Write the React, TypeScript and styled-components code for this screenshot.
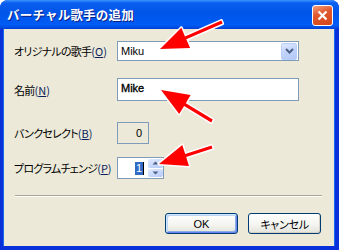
import styled, { createGlobalStyle } from 'styled-components';

const GlobalStyle = createGlobalStyle`
	html, body {
		margin: 0;
		padding: 0;
		background: #ffffff;
	}
	* {
		box-sizing: border-box;
	}
`;

const JP = `"Noto Sans CJK JP", "Noto Sans", sans-serif`;
const LATIN = `"Liberation Sans", "DejaVu Sans", sans-serif`;

const Window = styled.div`
	position: relative;
	width: 339px;
	height: 250px;
	display: flex;
	flex-direction: column;
	background: #0831d9;
	border-radius: 8px 8px 0 0;
	overflow: hidden;
`;

const TitleBar = styled.div`
	height: 29px;
	flex: none;
	display: flex;
	align-items: center;
	justify-content: space-between;
	padding: 0 6px 0 7px;
	background: linear-gradient(
		180deg,
		#3d95ff 0%,
		#0a5ff0 10%,
		#0055e8 45%,
		#005cf5 85%,
		#0050e6 93%,
		#003dd7 100%
	);
`;

const Title = styled.span`
	font-family: ${JP};
	font-size: 12.5px;
	font-weight: bold;
	color: #ffffff;
	text-shadow: 1px 1px 0 #0a1e8a;
	letter-spacing: 0.2px;
`;

const CloseButton = styled.div`
	width: 21px;
	height: 21px;
	margin-top: 2px;
	border: 1px solid #ffffff;
	border-radius: 3px;
	background: linear-gradient(160deg, #f4a07c 0%, #e2582e 40%, #d24619 100%);
	display: flex;
	align-items: center;
	justify-content: center;
`;

const Client = styled.div`
	flex: 1;
	margin: 0 4px 4px 3px;
	background: #ece9d8;
	display: flex;
	flex-direction: column;
	padding: 12px 0 0 10px;
	border-left: 1px solid #166aee;
	border-right: 1px solid #166aee;
`;

const Row = styled.div<{ $mt: number }>`
	display: flex;
	align-items: center;
	margin-top: ${(p) => p.$mt}px;
`;

const Label = styled.label`
	width: 103px;
	flex: none;
	white-space: nowrap;
	font-family: ${JP};
	font-size: 11px;
	font-feature-settings: 'palt';
	letter-spacing: -0.75px;
	color: #000000;
`;

const Key = styled.span`
	color: #0b1f5c;
	letter-spacing: 0;
	& u {
		text-decoration-thickness: 1px;
		text-underline-offset: 1px;
	}
`;

const Box = styled.div<{ $w: number; $h: number; $disabled?: boolean }>`
	width: ${(p) => p.$w}px;
	height: ${(p) => p.$h}px;
	border: 1px solid #7f9db9;
	background: ${(p) => (p.$disabled ? '#ece9d8' : '#ffffff')};
	display: flex;
	align-items: center;
	font-family: ${LATIN};
	font-size: 11px;
	color: #000000;
`;

const ComboText = styled.span`
	flex: 1;
	padding-left: 3px;
`;

const InputText = styled.span`
	align-self: flex-start;
	padding: 3px 0 0 3px;
	-webkit-text-stroke: 0.35px #000000;
`;

const RightText = styled.span`
	flex: 1;
	text-align: right;
	padding-right: 6px;
`;

const DropButton = styled.div`
	width: 16px;
	height: 17px;
	margin-right: 1px;
	border-radius: 2px;
	background: linear-gradient(160deg, #dfe9ff 0%, #c1d3fb 50%, #b4c8f6 100%);
	border: 1px solid #bacff7;
	display: flex;
	align-items: center;
	justify-content: center;
`;

const SpinField = styled.div`
	flex: 1;
	height: 100%;
	display: flex;
	align-items: center;
	justify-content: flex-end;
	padding-right: 4px;
`;

const Selected = styled.span`
	background: #316ac5;
	color: #ffffff;
	padding: 0 1px;
	line-height: 13px;
	border-right: 1px solid #000;
`;

const SpinColumn = styled.div`
	width: 15px;
	height: 100%;
	display: flex;
	flex-direction: column;
	gap: 1px;
	padding: 1px 0;
`;

const SpinButton = styled.div`
	flex: 1;
	border-radius: 2px;
	background: linear-gradient(160deg, #e2ebff 0%, #c6d6fb 60%, #b7cbf7 100%);
	display: flex;
	align-items: center;
	justify-content: center;
`;

const Separator = styled.div`
	margin: 16px 12px 0 1px;
	height: 2px;
	border-top: 1px solid #aca899;
	border-bottom: 1px solid #ffffff;
`;

const ButtonRow = styled.div`
	display: flex;
	justify-content: flex-end;
	gap: 10px;
	margin-top: 16px;
	padding-right: 13px;
`;

const Button = styled.div<{ $default?: boolean }>`
	width: 73px;
	height: 21px;
	border: 1px solid #003c74;
	border-radius: 3px;
	background: linear-gradient(180deg, #ffffff 0%, #f3f3ef 60%, #e3e2da 100%);
	box-shadow: ${(p) =>
		p.$default
			? 'inset 1px 1px 0 #cee7ff, inset -1px -1px 0 #6982ee, inset 2px 2px 0 #bcd4f6, inset -2px -2px 0 #89ade4'
			: 'inset -1px -1px 0 #d6d0c5'};
	display: flex;
	align-items: center;
	justify-content: center;
	font-family: ${LATIN};
	font-size: 11px;
	color: #000000;
`;

const ButtonJP = styled.span`
	font-family: ${JP};
	font-size: 11px;
	font-feature-settings: 'palt';
	letter-spacing: -0.3px;
`;

const Overlay = styled.svg`
	position: absolute;
	left: 0;
	top: 0;
	pointer-events: none;
`;

type Pt = [number, number];

function arrowPoints(tail: Pt, tip: Pt, head = 28, half = 11, shaft = 1.6): string {
	const dx = tip[0] - tail[0];
	const dy = tip[1] - tail[1];
	const len = Math.hypot(dx, dy);
	const ux = dx / len;
	const uy = dy / len;
	const nx = -uy;
	const ny = ux;
	const bx = tip[0] - ux * head;
	const by = tip[1] - uy * head;
	const pts: Pt[] = [
		[tail[0] + nx * shaft, tail[1] + ny * shaft],
		[bx + nx * shaft, by + ny * shaft],
		[bx + nx * half, by + ny * half],
		tip,
		[bx - nx * half, by - ny * half],
		[bx - nx * shaft, by - ny * shaft],
		[tail[0] - nx * shaft, tail[1] - ny * shaft],
	];
	return pts.map((p) => `${p[0].toFixed(1)},${p[1].toFixed(1)}`).join(' ');
}

const arrows: [Pt, Pt][] = [
	[[222, 22], [160, 49]],
	[[212, 121], [161, 90]],
	[[212, 147], [159, 164]],
];

function Chevron() {
	return (
		<svg width="9" height="6" viewBox="0 0 9 6">
			<path d="M1 1 L4.5 4.5 L8 1" fill="none" stroke="#4d6185" strokeWidth="2" />
		</svg>
	);
}

function Tri({ up }: { up?: boolean }) {
	return (
		<svg width="7" height="4" viewBox="0 0 7 4">
			<path d={up ? 'M0.5 3.5 L3.5 0.5 L6.5 3.5 Z' : 'M0.5 0.5 L3.5 3.5 L6.5 0.5 Z'} fill="#4d6185" />
		</svg>
	);
}

export default function App() {
	return (
		<>
			<GlobalStyle />
			<Window>
				<TitleBar>
					<Title>バーチャル歌手の追加</Title>
					<CloseButton>
						<svg width="11" height="11" viewBox="0 0 11 11">
							<path d="M1.5 1.5 L9.5 9.5 M9.5 1.5 L1.5 9.5" stroke="#ffffff" strokeWidth="2.2" />
						</svg>
					</CloseButton>
				</TitleBar>
				<Client>
					<Row $mt={0}>
						<Label>
							オリジナルの歌手<Key>(<u>O</u>)</Key>
						</Label>
						<Box $w={182} $h={20}>
							<ComboText>Miku</ComboText>
							<DropButton>
								<Chevron />
							</DropButton>
						</Box>
					</Row>
					<Row $mt={17}>
						<Label>
							名前<Key>(<u>N</u>)</Key>
						</Label>
						<Box $w={182} $h={23}>
							<InputText>Mike</InputText>
						</Box>
					</Row>
					<Row $mt={21}>
						<Label>
							バンクセレクト<Key>(<u>B</u>)</Key>
						</Label>
						<Box $w={32} $h={22} $disabled>
							<RightText>0</RightText>
						</Box>
					</Row>
					<Row $mt={13}>
						<Label>
							プログラムチェンジ<Key>(<u>P</u>)</Key>
						</Label>
						<Box $w={47} $h={22}>
							<SpinField>
								<Selected>1</Selected>
							</SpinField>
							<SpinColumn>
								<SpinButton>
									<Tri up />
								</SpinButton>
								<SpinButton>
									<Tri />
								</SpinButton>
							</SpinColumn>
						</Box>
					</Row>
					<Separator />
					<ButtonRow>
						<Button $default>OK</Button>
						<Button>
							<ButtonJP>キャンセル</ButtonJP>
						</Button>
					</ButtonRow>
				</Client>
				<Overlay width="339" height="250" viewBox="0 0 339 250">
					{arrows.map(([tail, tip], i) => (
						<polygon
							key={i}
							points={arrowPoints(tail, tip)}
							fill="#ff0000"
							stroke="#ffffff"
							strokeWidth="3"
							strokeLinejoin="round"
							paintOrder="stroke"
						/>
					))}
				</Overlay>
			</Window>
		</>
	);
}
